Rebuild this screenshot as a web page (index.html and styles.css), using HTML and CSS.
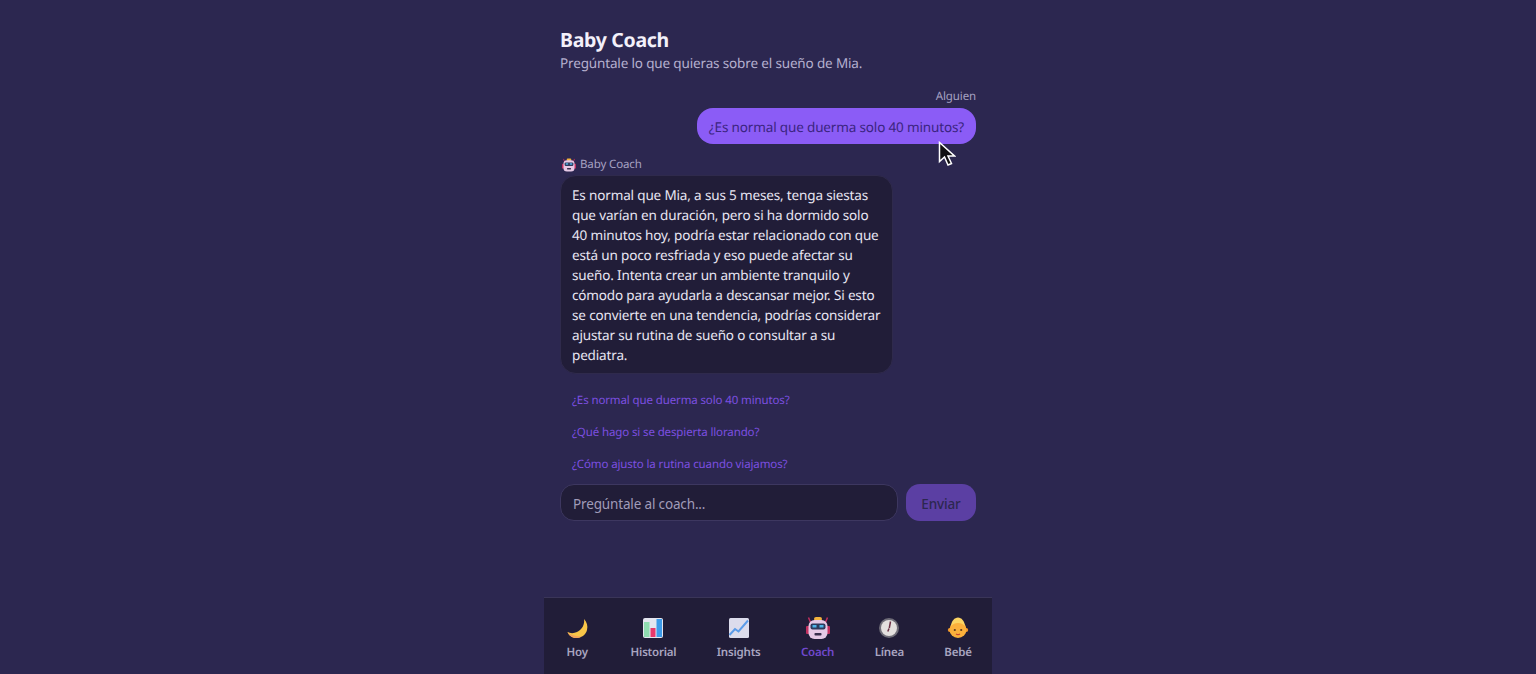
FILE: index.html
```html
<!DOCTYPE html>
<html lang="es">
<head>
    <meta charset="UTF-8">
    <meta name="viewport" content="width=device-width, initial-scale=1.0">
    <title>Baby Coach</title>
    <link rel="stylesheet" href="styles.css">
</head>
<body>
    <div class="app">
        <main class="coach">
            <h1>Baby Coach</h1>
            <p class="subtitle">Pregúntale lo que quieras sobre el sueño de Mia.</p>

            <div class="msg msg-user">
                <span class="author">Alguien</span>
                <div class="bubble bubble-user">¿Es normal que duerma solo 40 minutos?</div>
            </div>

            <div class="msg msg-coach">
                <span class="author">
                    <svg class="author-icon" viewBox="0 0 24 24"><use href="#robot"/></svg>
                    Baby Coach
                </span>
                <div class="bubble bubble-coach">Es normal que Mia, a sus 5 meses, tenga siestas<br>que varían en duración, pero si ha dormido solo<br>40 minutos hoy, podría estar relacionado con que<br>está un poco resfriada y eso puede afectar su<br>sueño. Intenta crear un ambiente tranquilo y<br>cómodo para ayudarla a descansar mejor. Si esto<br>se convierte en una tendencia, podrías considerar<br>ajustar su rutina de sueño o consultar a su<br>pediatra.</div>
            </div>

            <div class="suggestions">
                <a href="#">¿Es normal que duerma solo 40 minutos?</a>
                <a href="#">¿Qué hago si se despierta llorando?</a>
                <a href="#">¿Cómo ajusto la rutina cuando viajamos?</a>
            </div>

            <form class="ask">
                <input type="text" placeholder="Pregúntale al coach...">
                <button type="button" disabled>Enviar</button>
            </form>
        </main>

        <nav class="tabs">
            <a href="#">
                <svg viewBox="0 0 24 24">
                    <path d="M19 3c3 3 4 7 3 11-1 5-6 8-11 8-4 0-7-2.500-8.500-6 2.500 1.500 6.500 1.500 9.500 0 5-2 8-8 7-13z" fill="#f8c548"/>
                    <path d="M2.500 16c1.500 3.500 4.500 6 8.500 6 2 0 4-.5 5.500-1.500-4.500 0-10.500-1-14-4.500z" fill="#f3a35c"/>
                </svg>
                <span>Hoy</span>
            </a>
            <a href="#">
                <svg viewBox="0 0 24 24">
                    <rect x="2" y="2" width="20" height="20" rx="2" fill="#e4e6f0"/>
                    <rect x="3" y="6" width="5.500" height="15" fill="#8fdcb0"/>
                    <rect x="9.500" y="12" width="5" height="9" fill="#e8386b"/>
                    <rect x="15.500" y="3" width="5.500" height="18" fill="#3d9be9"/>
                </svg>
                <span>Historial</span>
            </a>
            <a href="#">
                <svg viewBox="0 0 24 24">
                    <rect x="2" y="2" width="20" height="20" rx="1.500" fill="#dcdcec"/>
                    <path d="M2.500 19l5.500-6 3.500 2.500 9.500-11" fill="none" stroke="#5b9be8" stroke-width="2"/>
                </svg>
                <span>Insights</span>
            </a>
            <a href="#" class="active">
                <svg viewBox="0 0 24 24"><use href="#robot"/></svg>
                <span>Coach</span>
            </a>
            <a href="#">
                <svg viewBox="0 0 24 24">
                    <circle cx="12" cy="12" r="10" fill="#6f6d78"/>
                    <circle cx="12" cy="12" r="8" fill="#e4e0df"/>
                    <path d="M12 12.500l-1.200 3M12.300 12l1.200-6.500" stroke="#6d3145" stroke-width="1.500" fill="none"/>
                </svg>
                <span>Línea</span>
            </a>
            <a href="#">
                <svg viewBox="0 0 24 24">
                    <circle cx="3.800" cy="14" r="2" fill="#f0952a"/>
                    <circle cx="20.200" cy="14" r="2" fill="#f0952a"/>
                    <circle cx="12" cy="13.500" r="8.500" fill="#fbb03b"/>
                    <path d="M5 10c.5-5 3.500-8.500 7-8.500s6.500 3.500 7 8.500c-2-2-4-3-7-3s-5 1-7 3z" fill="#fcd462"/>
                    <circle cx="8.800" cy="14" r="1.100" fill="#5b3a1e"/>
                    <circle cx="15.200" cy="14" r="1.100" fill="#5b3a1e"/>
                    <path d="M10 18c1.200.8 2.800.8 4 0" stroke="#c8452f" stroke-width="1.200" fill="none"/>
                </svg>
                <span>Bebé</span>
            </a>
        </nav>
    </div>

    <!-- Robot shared by the author line and the tab bar -->
    <svg class="defs" aria-hidden="true">
        <symbol id="robot" viewBox="0 0 24 24">
            <path d="M2.500 1.500l2.500 6M21.500 1.500l-2.500 6" stroke="#c2305f" stroke-width="1.500" fill="none"/>
            <rect x="0" y="10" width="4" height="8" rx="1" fill="#c2305f"/>
            <rect x="20" y="10" width="4" height="8" rx="1" fill="#c2305f"/>
            <rect x="8" y="1" width="8" height="4" rx="2" fill="#f3b33d"/>
            <rect x="2.500" y="4" width="19" height="19" rx="6" fill="#e6c9e6"/>
            <rect x="4.500" y="7.500" width="15" height="6" rx="2" fill="#2f3a5c"/>
            <rect x="6.500" y="9" width="4" height="2.500" fill="#4fb4e8"/>
            <rect x="13.500" y="9" width="4" height="2.500" fill="#4fb4e8"/>
            <rect x="8.500" y="17" width="7" height="2.500" rx=".8" fill="#3a2e4d"/>
        </symbol>
    </svg>

    <!-- Mouse pointer caught in the capture -->
    <svg class="pointer" viewBox="0 0 18 26">
        <path d="M1.500 1.500v19l5-4.500 3.500 8 3.500-1.500-3.500-7.500h6.500z" fill="#111" stroke="#fff" stroke-width="1.500"/>
    </svg>
</body>
</html>
```

FILE: styles.css
```css
* {
    box-sizing: border-box;
}

body {
    margin: 0;
    background-color: #2c2750;
    color: #f3f0fa;
    font-family: "Noto Sans", "Open Sans", sans-serif;
    text-rendering: geometricPrecision;
}

.app {
    width: 448px;
    height: 100vh;
    margin: 0 auto;
    display: flex;
    flex-direction: column;
}

.coach {
    flex: 1;
    padding: 26px 16px 0;
}

h1 {
    margin: 0;
    font-size: 19.5px;
    line-height: 27px;
    font-weight: 700;
    letter-spacing: -0.3px;
}

.subtitle {
    margin: 0 0 15px;
    font-size: 13.5px;
    line-height: 20px;
    letter-spacing: -0.15px;
    color: #b5b0cf;
}

.msg {
    display: flex;
    flex-direction: column;
    margin-bottom: 12px;
}

.msg-user {
    align-items: flex-end;
}

.msg-coach {
    align-items: flex-start;
}

.author {
    display: flex;
    align-items: center;
    gap: 4px;
    padding-top: 1px;
    margin-bottom: 3px;
    font-size: 11.5px;
    line-height: 16px;
    letter-spacing: -0.12px;
    color: #a6a1c2;
}

.msg-coach .author {
    margin-bottom: 2px;
}

.author-icon {
    width: 14px;
    height: 14px;
    margin-left: 2px;
}

.bubble {
    font-size: 13.5px;
    line-height: 20px;
    letter-spacing: -0.15px;
    border-radius: 16px;
}

.bubble-user {
    padding: 9px 12px 7px;
    background-color: #8b5cf6;
    color: #3b2480;
}

.bubble-coach {
    width: 333px;
    padding: 9px 11px 8px;
    background-color: #211d38;
    border: 1px solid #2f2a4c;
    color: #e8e5f2;
    white-space: nowrap;
}

.suggestions {
    display: flex;
    flex-direction: column;
    align-items: flex-start;
    margin-top: 19px;
}

.suggestions a {
    color: #7c4fe0;
    font-size: 11.5px;
    line-height: 16px;
    letter-spacing: -0.12px;
    text-decoration: none;
    padding: 0 12px;
    margin-bottom: 16px;
}

.ask {
    display: flex;
    gap: 8px;
    margin-top: -5px;
}

.ask input {
    flex: 1;
    min-width: 0;
    height: 37px;
    padding: 2px 12px 0;
    border: 1px solid #3d3760;
    border-radius: 14px;
    background-color: #211d38;
    color: #fff;
    font: inherit;
    font-size: 13.5px;
    letter-spacing: -0.15px;
}

.ask input::placeholder {
    color: #a09bb8;
    opacity: 1;
}

.ask button {
    width: 70px;
    height: 37px;
    padding: 2px 0 0;
    border: none;
    border-radius: 14px;
    background-color: #5b3fa3;
    color: #2c2750;
    font: inherit;
    font-size: 13.5px;
    font-weight: 500;
    letter-spacing: -0.15px;
}

.tabs {
    height: 77px;
    flex: none;
    display: flex;
    justify-content: space-around;
    align-items: flex-start;
    padding: 18px 0 0;
    background-color: #211d38;
    border-top: 1px solid #3a3558;
}

.tabs a {
    display: flex;
    flex-direction: column;
    align-items: center;
    gap: 5px;
    color: #a9a5c0;
    font-size: 11.5px;
    line-height: 16px;
    font-weight: 600;
    letter-spacing: -0.2px;
    text-decoration: none;
}

.tabs svg {
    width: 26px;
    height: 24px;
}

.tabs a.active {
    color: #7048cc;
}

.defs {
    display: none;
}

.pointer {
    position: absolute;
    left: 938px;
    top: 141px;
    width: 18px;
    height: 26px;
}
```
